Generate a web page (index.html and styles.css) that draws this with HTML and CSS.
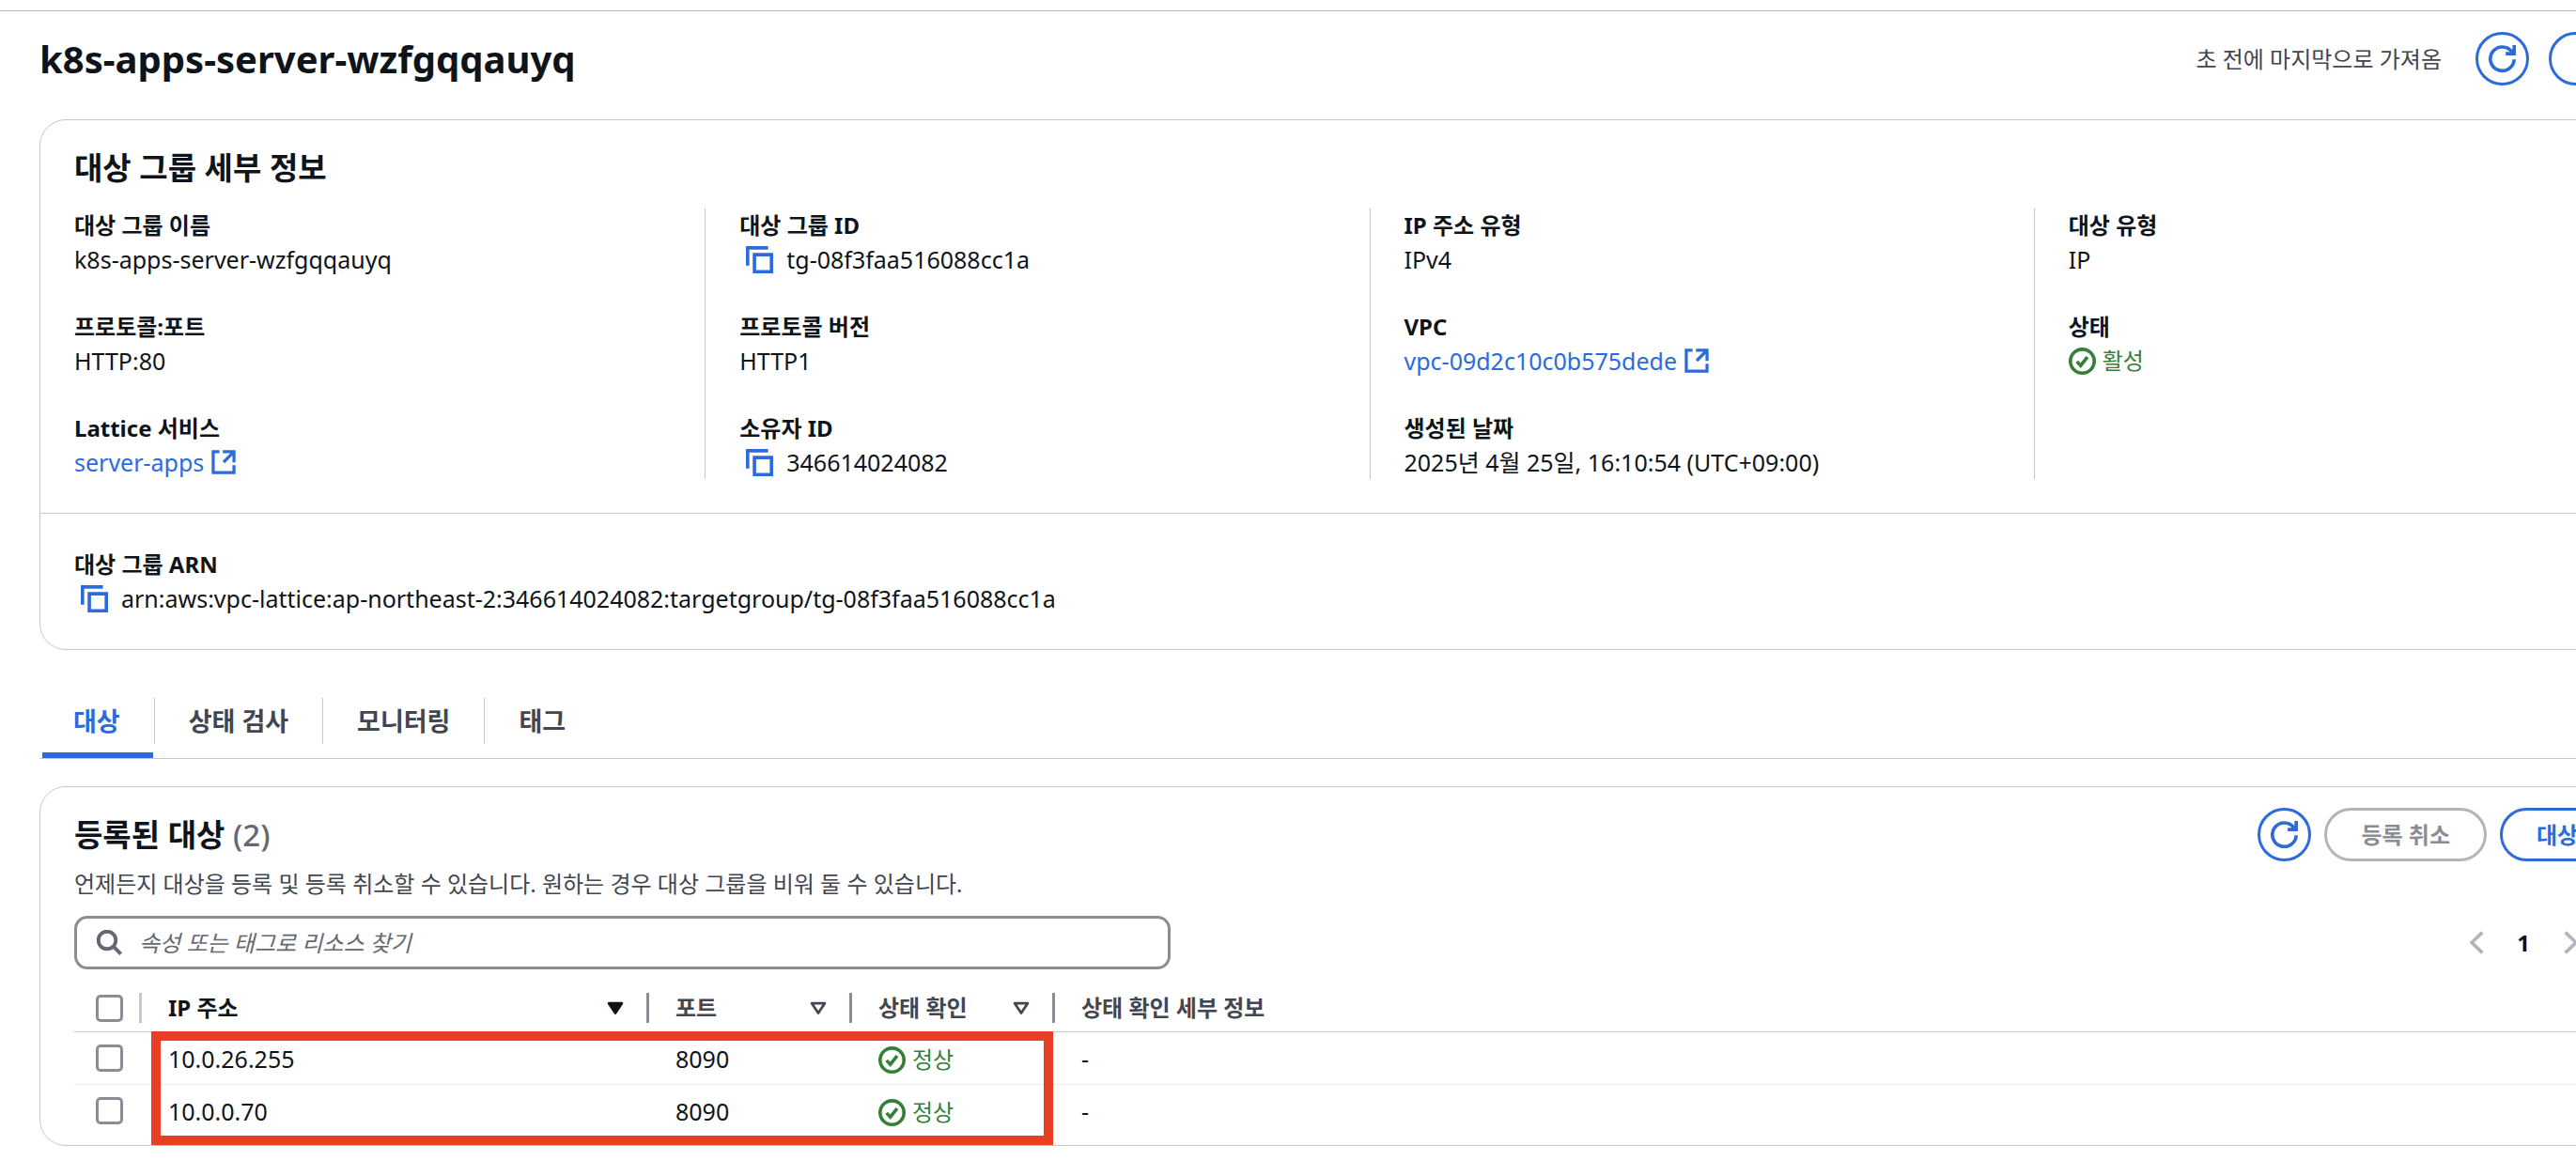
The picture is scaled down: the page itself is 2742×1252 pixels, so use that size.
FILE: index.html
```html
<!DOCTYPE html>
<html lang="ko">
<head>
<meta charset="utf-8">
<meta name="viewport" content="width=device-width, initial-scale=1">
<title>k8s-apps-server-wzfgqqauyq</title>
<link rel="stylesheet" href="styles.css">
</head>
<body>
<svg class="sprite" aria-hidden="true">
  <symbol id="i-refresh" viewBox="0 0 16 16"><path d="M15 8.400A7 7 0 1 1 13.700 4L14.500 5M15 0v5h-5"/></symbol>
  <symbol id="i-copy" viewBox="0 0 16 16"><path d="M1 11.500V1h12M5 5h10v10H5z"/></symbol>
  <symbol id="i-external" viewBox="0 0 16 16"><path d="M5.300 1.200H1.200v13.600h13.600V10M7.500 1.200h7.300v7M14.800 1.200L8 8"/></symbol>
  <symbol id="i-check" viewBox="0 0 16 16"><circle cx="8" cy="8" r="7"/><path d="M4.800 8.200L7 10.600l4-5"/></symbol>
  <symbol id="i-search" viewBox="0 0 16 16"><circle cx="6.500" cy="6.500" r="5.500"/><path d="M10.500 10.500L15.200 15.200"/></symbol>
  <symbol id="i-prev" viewBox="0 0 16 16"><path d="M11.200 2L5 8l6.200 6"/></symbol>
  <symbol id="i-next" viewBox="0 0 16 16"><path d="M4.800 2L11 8l-6.200 6"/></symbol>
  <symbol id="i-sort" viewBox="0 0 16 16"><path stroke-linejoin="round" d="M3 4.500h10L8 12z"/></symbol>
</svg>
<main class="page">
  <header class="page-header">
    <h1>k8s-apps-server-wzfgqqauyq</h1>
    <p class="fetched">초 전에 마지막으로 가져옴</p>
    <button class="btn btn-icon" type="button" aria-label="새로 고침"><svg class="icon"><use href="#i-refresh"/></svg></button>
    <button class="btn btn-actions" type="button" aria-label="작업"></button>
  </header>

  <section class="card">
    <h2 class="details-title">대상 그룹 세부 정보</h2>
    <div class="details">
      <dl class="column">
        <div><dt>대상 그룹 이름</dt><dd>k8s-apps-server-wzfgqqauyq</dd></div>
        <div><dt>프로토콜:포트</dt><dd>HTTP:80</dd></div>
        <div><dt>Lattice 서비스</dt><dd><a href="#service">server-apps <svg class="icon icon-ext"><use href="#i-external"/></svg></a></dd></div>
      </dl>
      <dl class="column">
        <div><dt>대상 그룹 ID</dt><dd><button class="copy" type="button" aria-label="복사"><svg class="icon"><use href="#i-copy"/></svg></button>tg-08f3faa516088cc1a</dd></div>
        <div><dt>프로토콜 버전</dt><dd>HTTP1</dd></div>
        <div><dt>소유자 ID</dt><dd><button class="copy" type="button" aria-label="복사"><svg class="icon"><use href="#i-copy"/></svg></button>346614024082</dd></div>
      </dl>
      <dl class="column">
        <div><dt>IP 주소 유형</dt><dd>IPv4</dd></div>
        <div><dt>VPC</dt><dd><a href="#vpc">vpc-09d2c10c0b575dede <svg class="icon icon-ext"><use href="#i-external"/></svg></a></dd></div>
        <div><dt>생성된 날짜</dt><dd>2025년 4월 25일, 16:10:54 (UTC+09:00)</dd></div>
      </dl>
      <dl class="column">
        <div><dt>대상 유형</dt><dd>IP</dd></div>
        <div><dt>상태</dt><dd><span class="status"><svg class="icon"><use href="#i-check"/></svg>활성</span></dd></div>
      </dl>
    </div>
    <dl class="arn">
      <div><dt>대상 그룹 ARN</dt><dd><button class="copy" type="button" aria-label="복사"><svg class="icon"><use href="#i-copy"/></svg></button>arn:aws:vpc-lattice:ap-northeast-2:346614024082:targetgroup/tg-08f3faa516088cc1a</dd></div>
    </dl>
  </section>

  <nav class="tabs" role="tablist">
    <button class="tab active" type="button" role="tab" aria-selected="true"><span>대상</span></button>
    <button class="tab" type="button" role="tab"><span>상태 검사</span></button>
    <button class="tab" type="button" role="tab"><span>모니터링</span></button>
    <button class="tab" type="button" role="tab"><span>태그</span></button>
  </nav>

  <section class="card targets">
    <div class="targets-header">
      <h2>등록된 대상 <span class="count">(2)</span></h2>
      <button class="btn btn-icon" type="button" aria-label="새로 고침"><svg class="icon"><use href="#i-refresh"/></svg></button>
      <button class="btn" type="button" disabled>등록 취소</button>
      <button class="btn btn-register" type="button">대상 등록</button>
    </div>
    <p class="description">언제든지 대상을 등록 및 등록 취소할 수 있습니다. 원하는 경우 대상 그룹을 비워 둘 수 있습니다.</p>
    <div class="tools">
      <label class="search">
        <svg class="icon icon-search"><use href="#i-search"/></svg>
        <input type="search" aria-label="리소스 찾기" placeholder="속성 또는 태그로 리소스 찾기">
      </label>
      <nav class="pagination" aria-label="페이지">
        <button type="button" aria-label="이전" disabled><svg class="icon"><use href="#i-prev"/></svg></button>
        <button class="current" type="button">1</button>
        <button type="button" aria-label="다음" disabled><svg class="icon"><use href="#i-next"/></svg></button>
      </nav>
    </div>
    <div class="table-wrap">
      <table>
        <colgroup><col class="c-select"><col class="c-ip"><col class="c-mid"><col class="c-mid"><col></colgroup>
        <thead>
          <tr>
            <th><div class="cell cell-select"><input type="checkbox" aria-label="모두 선택"></div></th>
            <th class="sorted"><div class="cell">IP 주소<svg class="icon icon-sort"><use href="#i-sort"/></svg></div></th>
            <th><div class="cell">포트<svg class="icon icon-sort"><use href="#i-sort"/></svg></div></th>
            <th><div class="cell">상태 확인<svg class="icon icon-sort"><use href="#i-sort"/></svg></div></th>
            <th><div class="cell cell-last">상태 확인 세부 정보</div></th>
          </tr>
        </thead>
        <tbody>
          <tr>
            <td class="select"><input type="checkbox" aria-label="10.0.26.255 선택"></td>
            <td>10.0.26.255</td><td>8090</td>
            <td><span class="status"><svg class="icon"><use href="#i-check"/></svg>정상</span></td><td>-</td>
          </tr>
          <tr>
            <td class="select"><input type="checkbox" aria-label="10.0.0.70 선택"></td>
            <td>10.0.0.70</td><td>8090</td>
            <td><span class="status"><svg class="icon"><use href="#i-check"/></svg>정상</span></td><td>-</td>
          </tr>
        </tbody>
      </table>
      <div class="highlight"></div>
    </div>
  </section>
</main>
</body>
</html>
```
FILE: styles.css
```css
:root {
  --blue: #2b6bdb;
  --text: #0f141a;
  --muted: #424650;
  --line: #c6c6cd;
  --control: #8c8c94;
  --green: #348038;
}

* { box-sizing: border-box; }

body {
  margin: 0;
  overflow-x: hidden;
  background: #fff;
  color: var(--text);
  font: 24px/36px "Noto Sans", "Noto Sans CJK KR", sans-serif;
}

h1, h2, p, dl, dd { margin: 0; }
button, input { font: inherit; color: inherit; }
button { padding: 0; border: 0; background: none; }
a { color: var(--blue); text-decoration: none; }

.sprite { position: absolute; width: 0; height: 0; }

.icon {
  flex: none;
  width: 29px;
  height: 29px;
  fill: none;
  stroke: currentColor;
  stroke-width: 2;
}

/* The console content is wider than the window and runs past its right edge. */
.page {
  margin: 11px -167px 0 0;
  border-top: 1px solid #b4b4bb;
  padding: 22px 0 32px;
}

.page > * { margin-left: 42px; }

.page-header {
  display: flex;
  align-items: center;
  margin-bottom: 36px;
}

h1 { flex: 1; font-size: 40px; line-height: 57px; }
h2 { font-size: 33px; line-height: 44px; }

.fetched { margin-right: 36px; color: var(--muted); }

.btn {
  height: 57px;
  padding: 0 36px;
  border: 3px solid var(--blue);
  border-radius: 29px;
  color: var(--blue);
  font-weight: 700;
  white-space: nowrap;
}

.btn:disabled { border-color: #b4b4bb; color: var(--control); }

.btn-icon {
  display: grid;
  place-items: center;
  width: 57px;
  padding: 0;
}

.btn-actions { width: 196px; margin-left: 21px; }
.btn-register { width: 211px; text-align: left; }

.card {
  border: 1px solid var(--line);
  border-radius: 28px;
}

.details-title { padding: 29px 36px 21px; }

.details {
  display: grid;
  grid-template-columns: repeat(4, 1fr);
  padding: 0 36px 36px 0;
  border-bottom: 1px solid var(--line);
}

.column {
  display: grid;
  grid-template-rows: repeat(3, 72px);
  gap: 36px;
  padding-left: 36px;
}

.column + .column { border-left: 1px solid var(--line); }

dt { font-weight: 700; }
dd, dd a { display: flex; align-items: center; }
dd, td { font-size: 25px; }
dd a { gap: 8px; }
.icon-ext { width: 26px; height: 26px; }

.copy {
  display: flex;
  margin: 0 14px 0 7px;
  color: var(--blue);
}

.arn { padding: 36px; }

.status {
  display: inline-flex;
  align-items: center;
  gap: 7px;
  color: var(--green);
  font-size: 24px;
}

.tabs {
  display: flex;
  margin-top: 37px;
  margin-bottom: 29px;
  border-bottom: 1px solid var(--line);
}

.tab {
  height: 78px;
  padding-top: 14px;
  border-bottom: 6px solid transparent;
  color: var(--muted);
  font-size: 27px;
  font-weight: 700;
}

.tab span {
  display: block;
  margin-bottom: 9px;
  padding: 0 36px;
  border-right: 1px solid var(--line);
  line-height: 49px;
}

.tab:last-child span { border-right: 0; }

.tab.active {
  color: var(--blue);
  background: linear-gradient(var(--blue), var(--blue)) 3px 100% / calc(100% - 5px) 6px no-repeat border-box;
}

.targets { padding: 22px 36px 9px; }

.targets-header {
  display: flex;
  align-items: center;
  gap: 14px;
}

.targets-header h2 { flex: 1; }
.count { color: #656871; font-weight: 500; }
.description { margin-top: 6px; color: var(--muted); }

.tools {
  display: flex;
  align-items: center;
  justify-content: space-between;
  margin: 16px 0;
}

.search {
  display: flex;
  align-items: center;
  gap: 18px;
  flex: 0 1 1167px;
  height: 57px;
  padding: 0 21px;
  border: 3px solid var(--control);
  border-radius: 14px;
  color: #656871;
}

.icon-search { width: 27px; height: 27px; stroke-width: 2.3; }

.search input {
  flex: 1;
  min-width: 0;
  padding: 0;
  border: 0;
  outline: 0;
  background: none;
}

.search input::placeholder { color: #656871; font-style: italic; opacity: 1; }

.pagination { display: flex; gap: 22px; padding-right: 122px; }
.pagination button { display: grid; place-items: center; width: 28px; }
.pagination button:disabled { color: #b4b4bb; }
.pagination .current { font-weight: 700; }

.table-wrap { position: relative; }

table {
  width: 100%;
  border-collapse: separate;
  border-spacing: 0;
  table-layout: fixed;
}

.c-select { width: 72px; }
.c-ip { width: 540px; }
.c-mid { width: 216px; }

th, td { padding: 0; text-align: left; }

th {
  height: 51px;
  border-bottom: 1px solid var(--line);
  color: var(--muted);
  font-weight: 700;
}

.sorted { color: var(--text); }

.cell {
  display: flex;
  align-items: center;
  justify-content: space-between;
  height: 32px;
  padding: 0 22px 0 28px;
  border-right: 3px solid var(--control);
  line-height: 32px;
}

.cell-select { padding: 0 0 0 23px; border-color: var(--line); }
.cell-last { border-right: 0; }

.icon-sort { width: 22px; height: 22px; }
.sorted .icon-sort { fill: currentColor; }

td { height: 56px; padding-left: 28px; border-bottom: 1px solid #ebebf0; }
tbody tr:last-child td { height: 55px; border-bottom: 0; }
td .status { vertical-align: middle; }
td.select { padding-left: 23px; }

input[type="checkbox"] {
  appearance: none;
  display: block;
  width: 29px;
  height: 29px;
  margin: 0;
  border: 3px solid var(--control);
  border-radius: 5px;
}

/* Red frame drawn over the rows under discussion. */
.highlight {
  position: absolute;
  top: 50px;
  bottom: -9px;
  left: 82px;
  width: 960px;
  border: 10px solid #ea3e24;
  pointer-events: none;
}
```
